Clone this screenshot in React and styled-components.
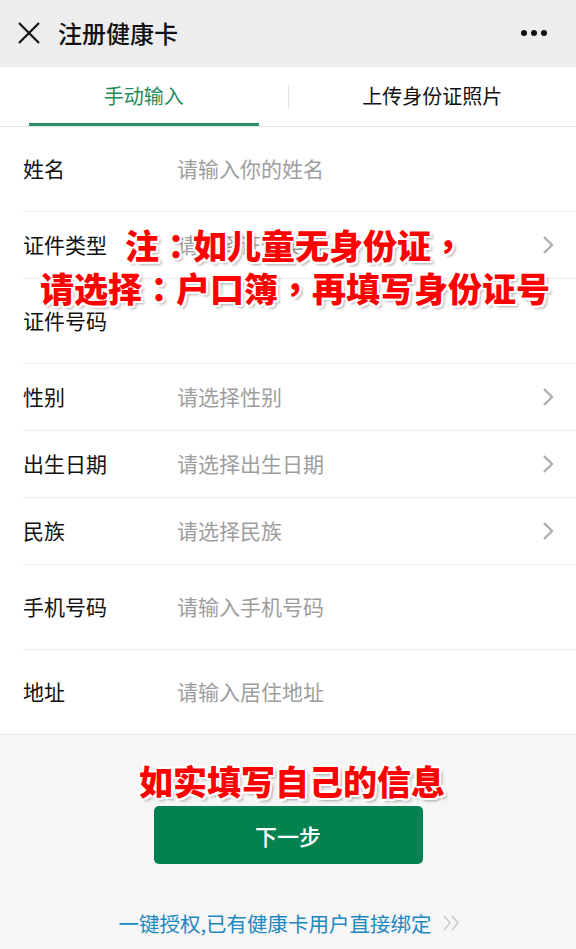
import React from "react";
import styled, { createGlobalStyle } from "styled-components";

const GlobalStyle = createGlobalStyle`
  body {
    margin: 0;
    background: #f6f6f6;
    font-family: "Noto Sans CJK SC", "Noto Sans", sans-serif;
  }
`;

const fields = [
  { label: "姓名", hint: "请输入你的姓名", input: true },
  { label: "证件类型", hint: "请选择证件类型" },
  { label: "证件号码", hint: "", input: true },
  { label: "性别", hint: "请选择性别" },
  { label: "出生日期", hint: "请选择出生日期" },
  { label: "民族", hint: "请选择民族" },
  { label: "手机号码", hint: "请输入手机号码", input: true },
  { label: "地址", hint: "请输入居住地址", input: true },
];

const Chevron = () => (
  <svg width="12" height="20" viewBox="0 0 12 20">
    <path d="M2 2 L10 10 L2 18" fill="none" stroke="#b0b0b0" strokeWidth="2.4" />
  </svg>
);

export default function App() {
  return (
    <Page>
      <GlobalStyle />
      <Header>
        <svg width="24" height="24" viewBox="0 0 24 24">
          <path d="M2 2 L22 22 M22 2 L2 22" stroke="#111" strokeWidth="2.2" />
        </svg>
        <Title>注册健康卡</Title>
        <Dots>
          <span />
          <span />
          <span />
        </Dots>
      </Header>

      <Tabs>
        <Tab active>手动输入</Tab>
        <TabDivider />
        <Tab>上传身份证照片</Tab>
      </Tabs>

      <Form>
        {fields.map((f) => (
          <Row key={f.label} tall={f.input}>
            <Label>{f.label}</Label>
            <Hint>{f.hint}</Hint>
            {!f.input && <Chevron />}
          </Row>
        ))}
        <Note>
          注<Punct>：</Punct>如儿童无身份证<Punct>，</Punct>
          <br />
          请选择<Punct>：</Punct>户口簿<Punct>，</Punct>再填写身份证号
        </Note>
      </Form>

      <Footer>
        <Annotation>如实填写自己的信息</Annotation>
        <NextButton>下一步</NextButton>
        <BindLink>
          一键授权,已有健康卡用户直接绑定
          <svg width="20" height="18" viewBox="0 0 20 18">
            <path
              d="M2 2 L8 9 L2 16 M10 2 L16 9 L10 16"
              fill="none"
              stroke="#cccccc"
              strokeWidth="1.6"
            />
          </svg>
        </BindLink>
      </Footer>
    </Page>
  );
}

const Page = styled.div`
  width: 576px;
  min-height: 949px;
  background: #f6f6f6;
`;

const Header = styled.div`
  height: 67px;
  background: #ededed;
  display: flex;
  align-items: center;
  padding: 0 29px 2px 17px;
  box-sizing: border-box;
`;

const Title = styled.div`
  margin-left: 17px;
  font-size: 24px;
  font-weight: 500;
  color: #111;
  flex: 1;
`;

const Dots = styled.div`
  display: flex;
  gap: 4px;

  span {
    width: 6px;
    height: 6px;
    border-radius: 50%;
    background: #111;
  }
`;

const Tabs = styled.div`
  height: 60px;
  background: #fff;
  display: flex;
  align-items: stretch;
  border-bottom: 1px solid #e3e3e3;
  box-sizing: border-box;
`;

const Tab = styled.div`
  flex: 1;
  display: flex;
  align-items: center;
  justify-content: center;
  padding-bottom: 2px;
  font-size: 20px;
  color: ${(p) => (p.active ? "#1f8c5c" : "#111")};
  position: relative;

  &::after {
    content: "";
    display: ${(p) => (p.active ? "block" : "none")};
    position: absolute;
    left: 29px;
    right: 29px;
    bottom: 0;
    height: 3px;
    background: #2a9167;
  }
`;

const TabDivider = styled.div`
  width: 1px;
  height: 24px;
  align-self: center;
  background: #e2e2e2;
`;

const Form = styled.div`
  position: relative;
  background: #fff;
  padding-left: 23px;
  border-bottom: 1px solid #e6e6e6;
`;

const Row = styled.div`
  height: ${(p) => (p.tall ? "85px" : "67px")};
  box-sizing: border-box;
  display: flex;
  align-items: center;
  padding: 0 22px 3px 0;
  border-bottom: 1px solid #ececec;

  &:nth-last-of-type(2) {
    border-bottom: none;
    height: 84px;
  }

  svg {
    margin-top: 3px;
  }
`;

const Label = styled.div`
  width: 154px;
  flex-shrink: 0;
  font-size: 21px;
  color: #111;
`;

const Hint = styled.div`
  flex: 1;
  font-size: 21px;
  color: #9e9e9e;
`;

const redText = `
  color: #ff0000;
  font-weight: 900;
  font-size: 34px;
  text-shadow: 2px 0 0 #fff, -2px 0 0 #fff, 0 2px 0 #fff, 0 -2px 0 #fff,
    2px 2px 0 #fff, -2px -2px 0 #fff, 2px -2px 0 #fff, -2px 2px 0 #fff,
    3px 3px 3px rgba(0, 0, 0, 0.35);
`;

const Note = styled.div`
  ${redText}
  position: absolute;
  left: 14px;
  right: 0;
  top: 96px;
  line-height: 43px;
  text-align: center;
`;

const Punct = styled.span`
  font-family: "Noto Sans CJK TC", "Noto Sans CJK SC", sans-serif;
`;

const Footer = styled.div`
  display: flex;
  flex-direction: column;
  align-items: center;
  padding-top: 25px;
`;

const Annotation = styled.div`
  ${redText}
  line-height: 42px;
  margin-left: 8px;
`;

const NextButton = styled.button`
  margin-top: 4px;
  width: 269px;
  height: 58px;
  border: none;
  border-radius: 5px;
  background: #03814f;
  color: #fff;
  font-family: inherit;
  font-size: 22px;
  font-weight: 500;
`;

const BindLink = styled.div`
  margin-top: 45px;
  margin-left: 4px;
  font-size: 20.5px;
  line-height: 28px;
  color: #1e88c0;
  display: flex;
  align-items: center;

  svg {
    margin-left: 10px;
  }
`;
